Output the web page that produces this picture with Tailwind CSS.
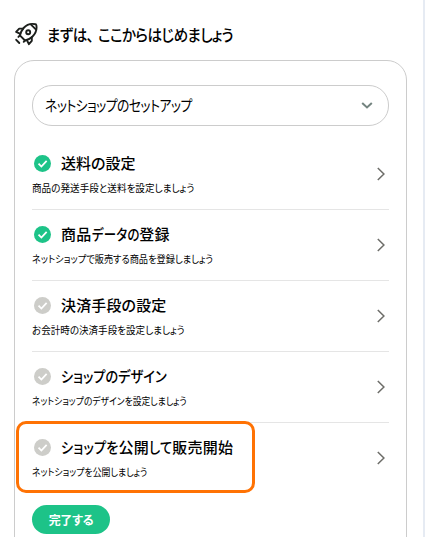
<!DOCTYPE html>
<html lang="ja">
<head>
    <meta charset="UTF-8" />
    <meta name="viewport" content="width=device-width, initial-scale=1.0" />
    <title>ネットショップのセットアップ</title>
    <script src="https://cdn.jsdelivr.net/npm/@tailwindcss/browser@4"></script>
</head>
<body class="bg-white text-black font-['Noto_Sans_CJK_JP',sans-serif] [font-feature-settings:'palt'] whitespace-nowrap overflow-hidden">
    <div class="h-[537px] w-[425px] border-r-2 border-[#e6ebf3] pl-3.5 overflow-hidden">
        <!-- 見出し -->
        <header class="flex h-[60px] items-center pt-[7px]">
            <svg class="size-6 shrink-0" viewBox="0 0 24 24" fill="none" stroke="#1c1f1c" stroke-width="1.9" stroke-linecap="round" stroke-linejoin="round">
                <path d="M21.6 2.2C16.8 1.2 12.6 2.6 9.6 6C7.9 8 6.6 10.4 5.9 13.4L11 18.5C14 17.8 16.4 16.5 18.3 14.7C21.9 11.3 23.1 7 22.3 2.9Q22.2 2.3 21.6 2.2Z" />
                <path d="M17 2.6L21.8 7.4" />
                <circle cx="14.2" cy="10.2" r="2" />
                <path d="M9.2 6.6L5.2 6.6L2.1 9.8L6.4 11.8M17.8 15.2L17.8 18.8L14.9 22.2L12.8 18" />
                <path d="M5.9 13.4L4.4 14.9M11 18.5L9.7 19.8M2.2 17.8L5.3 21" />
            </svg>
            <h1 class="ml-[9px] origin-left scale-x-[.907] text-base font-medium tracking-[-0.6px]">まずは、<span class="ml-[5px]">ここからはじめましょう</span></h1>
        </header>

        <main class="h-[500px] w-[393px] rounded-[20px] border border-[#ccc] px-[17px] pt-6">
            <button class="flex h-[41px] w-full items-center justify-between rounded-[20px] border border-[#ccc] pl-3 pr-[15px]">
                <span class="origin-left scale-x-[.855] text-[15px] tracking-[-0.6px]">ネットショップのセットアップ</span>
                <svg class="h-[7px] w-3" viewBox="0 0 12 7" fill="none" stroke="#748480" stroke-width="2"><path d="M1.2 1L6 5.5L10.8 1" /></svg>
            </button>

            <!-- 設定ステップ -->
            <ul class="mt-[13px]">
                <li class="flex h-[71px] items-center justify-between border-b border-[#e5e5e5] pr-1">
                    <div>
                        <div class="flex h-6 items-center pt-0.5">
                            <svg class="ml-0.5 size-[17px]" viewBox="0 0 18 18" fill="none"><circle cx="9" cy="9" r="9" fill="#1dc388" /><path d="M4.8 9.2L7.8 12.2L13.4 6.2" stroke="#fff" stroke-width="1.9" /></svg>
                            <h2 class="ml-2.5 text-[15px] font-medium">送料の設定</h2>
                        </div>
                        <p class="mt-1 h-5 origin-left scale-x-[.96] text-[10px] leading-5">商品の発送手段と送料を設定しましょう</p>
                    </div>
                    <svg class="h-3.5 w-2" viewBox="0 0 8 14" fill="none" stroke="#6d6d69" stroke-width="1.5"><path d="M.8 1L6.9 7L.8 13" /></svg>
                </li>
                <li class="flex h-[71px] items-center justify-between border-b border-[#e5e5e5] pr-1">
                    <div>
                        <div class="flex h-6 items-center pt-0.5">
                            <svg class="ml-0.5 size-[17px]" viewBox="0 0 18 18" fill="none"><circle cx="9" cy="9" r="9" fill="#1dc388" /><path d="M4.8 9.2L7.8 12.2L13.4 6.2" stroke="#fff" stroke-width="1.9" /></svg>
                            <h2 class="ml-2.5 text-[15px] font-medium tracking-[.3px]">商品<span class="-mr-[10px] inline-block origin-left scale-x-[.83]">データの</span>登録</h2>
                        </div>
                        <p class="mt-1 h-5 origin-left scale-x-[.92] text-[10px] leading-5">ネットショップで販売する商品を登録しましょう</p>
                    </div>
                    <svg class="h-3.5 w-2" viewBox="0 0 8 14" fill="none" stroke="#6d6d69" stroke-width="1.5"><path d="M.8 1L6.9 7L.8 13" /></svg>
                </li>
                <li class="flex h-[71px] items-center justify-between border-b border-[#e5e5e5] pr-1">
                    <div>
                        <div class="flex h-6 items-center pt-0.5">
                            <svg class="ml-0.5 size-[17px]" viewBox="0 0 18 18" fill="none"><circle cx="9" cy="9" r="9" fill="#cdcdc9" /><path d="M4.8 9.2L7.8 12.2L13.4 6.2" stroke="#fff" stroke-width="1.9" /></svg>
                            <h2 class="ml-2.5 text-[15px] font-medium tracking-[.15px]">決済手段の設定</h2>
                        </div>
                        <p class="mt-1 h-5 origin-left scale-x-[.955] text-[10px] leading-5">お会計時の決済手段を設定しましょう</p>
                    </div>
                    <svg class="h-3.5 w-2" viewBox="0 0 8 14" fill="none" stroke="#6d6d69" stroke-width="1.5"><path d="M.8 1L6.9 7L.8 13" /></svg>
                </li>
                <li class="flex h-[71px] items-center justify-between border-b border-[#e5e5e5] pr-1">
                    <div>
                        <div class="flex h-6 items-center pt-0.5">
                            <svg class="ml-0.5 size-[17px]" viewBox="0 0 18 18" fill="none"><circle cx="9" cy="9" r="9" fill="#cdcdc9" /><path d="M4.8 9.2L7.8 12.2L13.4 6.2" stroke="#fff" stroke-width="1.9" /></svg>
                            <h2 class="ml-2.5 origin-left scale-x-[.88] text-[15px] font-medium">ショップのデザイン</h2>
                        </div>
                        <p class="mt-1 h-5 origin-left scale-x-[.88] text-[10px] leading-5">ネットショップのデザインを設定しましょう</p>
                    </div>
                    <svg class="h-3.5 w-2" viewBox="0 0 8 14" fill="none" stroke="#6d6d69" stroke-width="1.5"><path d="M.8 1L6.9 7L.8 13" /></svg>
                </li>
                <li class="relative flex h-[70px] items-center justify-between pr-1">
                    <!-- 強調枠 -->
                    <div class="absolute -left-4 -top-0.5 h-[72px] w-[239px] rounded-[10px] border-3 border-[#ff7203]"></div>
                    <div>
                        <div class="flex h-6 items-center pt-0.5">
                            <svg class="ml-0.5 size-[17px]" viewBox="0 0 18 18" fill="none"><circle cx="9" cy="9" r="9" fill="#cdcdc9" /><path d="M4.8 9.2L7.8 12.2L13.4 6.2" stroke="#fff" stroke-width="1.9" /></svg>
                            <h2 class="ml-2.5 text-[15px] font-medium tracking-[.2px]"><span class="-mr-[8px] inline-block origin-left scale-x-[.88]">ショップを</span>公開<span class="-mr-[3px] inline-block origin-left scale-x-[.88]">して</span>販売開始</h2>
                        </div>
                        <p class="mt-1 h-5 origin-left scale-x-[.89] text-[10px] leading-5">ネットショップを公開しましょう</p>
                    </div>
                    <svg class="h-3.5 w-2" viewBox="0 0 8 14" fill="none" stroke="#6d6d69" stroke-width="1.5"><path d="M.8 1L6.9 7L.8 13" /></svg>
                </li>
            </ul>

            <button class="mt-3 flex h-[29px] w-[78px] items-center justify-center rounded-full bg-[#1dc388] text-xs font-bold tracking-[-0.3px] text-white">完了する</button>
        </main>
    </div>
</body>
</html>
